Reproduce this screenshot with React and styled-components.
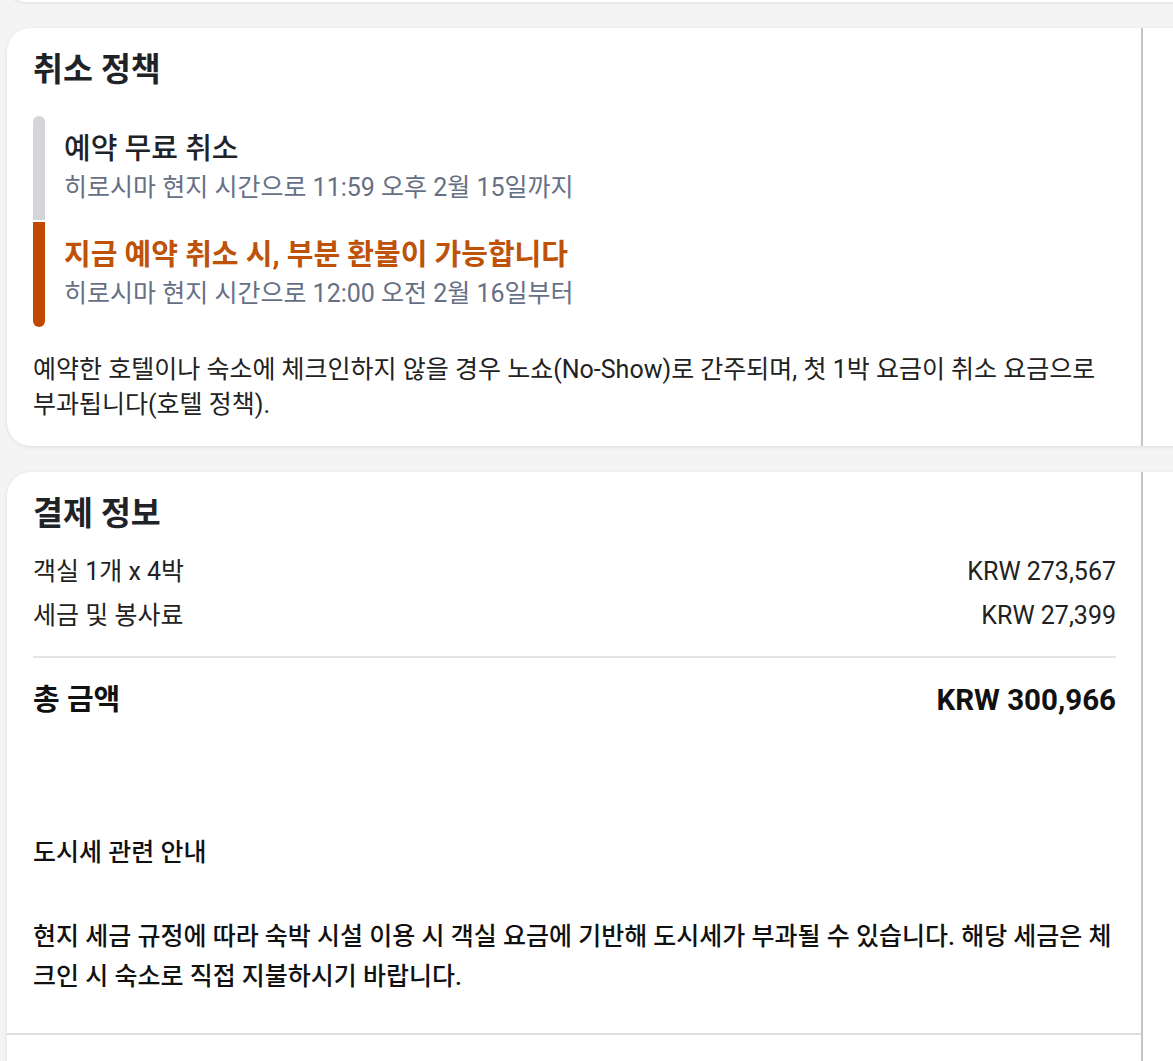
import React from 'react';
import styled, { createGlobalStyle } from 'styled-components';

const GlobalStyle = createGlobalStyle`
  html, body {
    margin: 0;
    padding: 0;
    background: #f4f4f5;
    overflow: hidden;
  }
  body {
    font-family: Roboto, "Noto Sans CJK KR", sans-serif;
    color: #222;
  }
  * {
    box-sizing: border-box;
  }
`;

const policies = [
  {
    id: 1,
    title: '예약 무료 취소',
    time: '히로시마 현지 시간으로 11:59 오후 2월 15일까지',
    tone: 'free',
  },
  {
    id: 2,
    title: '지금 예약 취소 시, 부분 환불이 가능합니다',
    time: '히로시마 현지 시간으로 12:00 오전 2월 16일부터',
    tone: 'partial',
  },
];

const charges = [
  { id: 'room', label: '객실 1개 x 4박', amount: 'KRW 273,567' },
  { id: 'tax', label: '세금 및 봉사료', amount: 'KRW 27,399' },
];

const App = () => {
  return (
    <Page>
      <GlobalStyle />
      <PrevCardEnd />

      <Card>
        <CardInner>
          <Section>
            <CardTitle>취소 정책</CardTitle>
            <Timeline>
              {policies.map((p, i) => (
                <PolicyItem key={p.id}>
                  <Bar
                    tone={p.tone}
                    first={i === 0}
                    last={i === policies.length - 1}
                  />
                  <PolicyText first={i === 0}>
                    <PolicyTitle tone={p.tone}>{p.title}</PolicyTitle>
                    <PolicyTime>{p.time}</PolicyTime>
                  </PolicyText>
                </PolicyItem>
              ))}
            </Timeline>
            <PolicyNote>
              예약한 호텔이나 숙소에 체크인하지 않을 경우 노쇼(No-Show)로
              간주되며, 첫 1박 요금이 취소 요금으로 부과됩니다(호텔 정책).
            </PolicyNote>
          </Section>
        </CardInner>
      </Card>

      <Card>
        <CardInner>
          <Section bordered>
            <CardTitle>결제 정보</CardTitle>
            <ChargeList>
              {charges.map(c => (
                <ChargeRow key={c.id}>
                  <span>{c.label}</span>
                  <span>{c.amount}</span>
                </ChargeRow>
              ))}
            </ChargeList>
            <Divider />
            <TotalRow>
              <span>총 금액</span>
              <TotalAmount>KRW 300,966</TotalAmount>
            </TotalRow>
            <NoticeTitle>도시세 관련 안내</NoticeTitle>
            <NoticeText>
              현지 세금 규정에 따라 숙박 시설 이용 시 객실 요금에 기반해
              도시세가 부과될 수 있습니다. 해당 세금은 체크인 시 숙소로 직접
              지불하시기 바랍니다.
            </NoticeText>
          </Section>
          <FooterSpace />
        </CardInner>
      </Card>
    </Page>
  );
};

const Page = styled.div`
  display: flex;
  flex-direction: column;
  gap: 26px;
  width: 100%;
  height: 1061px;
  padding-left: 7px;
  overflow: hidden;
`;

const Card = styled.div`
  flex-shrink: 0;
  margin-right: -60px;
  border-radius: 24px;
  background-color: #fff;
  box-shadow: 0 1px 4px rgba(0, 0, 0, 0.09);
`;

const PrevCardEnd = styled(Card)`
  height: 40px;
  margin-top: -38px;
`;

const CardInner = styled.div`
  width: 1136px;
  border-right: 2px solid #c3c5c9;
`;

const Section = styled.div`
  padding: 21px 25px 0 26px;
  padding-bottom: ${props => (props.bordered ? '36px' : '24px')};
  border-bottom: ${props => (props.bordered ? '2px solid #dedede' : 'none')};
`;

const CardTitle = styled.h2`
  margin: 0;
  font-size: 32.5px;
  line-height: 42px;
  font-weight: 700;
  color: #1f2328;
`;

const Timeline = styled.div`
  display: flex;
  flex-direction: column;
  gap: 2px;
  margin-top: 25px;
`;

const PolicyItem = styled.div`
  display: flex;
  gap: 19px;
`;

const Bar = styled.div`
  flex-shrink: 0;
  width: 12px;
  background-color: ${props => (props.tone === 'partial' ? '#c04800' : '#d4d5d8')};
  border-radius: ${props =>
    `${props.first ? '6px 6px' : '0 0'} ${props.last ? '6px 6px' : '0 0'}`};
`;

const PolicyText = styled.div`
  padding: 15px 0 ${props => (props.first ? '15px' : '16px')};
`;

const PolicyTitle = styled.div`
  font-size: 29px;
  line-height: 36px;
  font-weight: ${props => (props.tone === 'partial' ? 700 : 500)};
  color: ${props => (props.tone === 'partial' ? '#bd5208' : '#1f2328')};
`;

const PolicyTime = styled.div`
  margin-top: 4px;
  font-size: 25px;
  line-height: 34px;
  color: #667085;
`;

const PolicyNote = styled.p`
  margin: 25px 0 0;
  font-size: 25px;
  line-height: 35px;
  color: #222;
`;

const ChargeList = styled.div`
  margin-top: 15px;
`;

const ChargeRow = styled.div`
  display: flex;
  justify-content: space-between;
  align-items: center;
  font-size: 25px;
  line-height: 44px;
  color: #222;
`;

const Divider = styled.hr`
  margin: 18px 0 0;
  border: 0;
  height: 2px;
  background-color: #e4e4e4;
`;

const TotalRow = styled.div`
  display: flex;
  justify-content: space-between;
  align-items: center;
  margin-top: 22px;
  font-size: 29px;
  line-height: 40px;
  font-weight: 700;
  color: #111;
`;

const TotalAmount = styled.span`
  font-size: 29.5px;
`;

const NoticeTitle = styled.div`
  margin-top: 116px;
  font-size: 25px;
  line-height: 34px;
  font-weight: 500;
  color: #111;
`;

const NoticeText = styled.p`
  margin: 47px 0 0;
  font-size: 25px;
  line-height: 40px;
  font-weight: 500;
  color: #111;
`;

const FooterSpace = styled.div`
  height: 60px;
`;

export default App;
